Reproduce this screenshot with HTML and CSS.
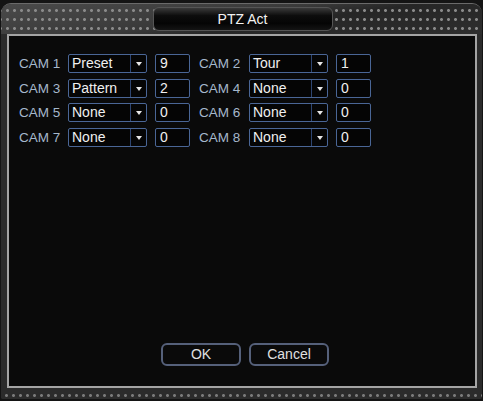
FILE: index.html
```html
<!DOCTYPE html>
<html>
<head>
<meta charset="utf-8">
<link rel="stylesheet" href="styles.css">
</head>
<body>
<div class="frame">
  <div class="header">
    <div class="title">PTZ Act</div>
  </div>
  <div class="panel">
    <div class="grid">
      <span class="lbl">CAM 1</span>
      <div class="sel"><span class="val">Preset</span><span class="arr"></span></div>
      <div class="num">9</div>
      <span class="lbl">CAM 2</span>
      <div class="sel"><span class="val">Tour</span><span class="arr"></span></div>
      <div class="num">1</div>

      <span class="lbl">CAM 3</span>
      <div class="sel"><span class="val">Pattern</span><span class="arr"></span></div>
      <div class="num">2</div>
      <span class="lbl">CAM 4</span>
      <div class="sel"><span class="val">None</span><span class="arr"></span></div>
      <div class="num">0</div>

      <span class="lbl">CAM 5</span>
      <div class="sel"><span class="val">None</span><span class="arr"></span></div>
      <div class="num">0</div>
      <span class="lbl">CAM 6</span>
      <div class="sel"><span class="val">None</span><span class="arr"></span></div>
      <div class="num">0</div>

      <span class="lbl">CAM 7</span>
      <div class="sel"><span class="val">None</span><span class="arr"></span></div>
      <div class="num">0</div>
      <span class="lbl">CAM 8</span>
      <div class="sel"><span class="val">None</span><span class="arr"></span></div>
      <div class="num">0</div>
    </div>
    <div class="buttons">
      <div class="btn">OK</div>
      <div class="btn">Cancel</div>
    </div>
  </div>
  <div class="footer"></div>
</div>
</body>
</html>
```
FILE: styles.css
```css
html, body {
  margin: 0;
  padding: 0;
  background: #141414;
  width: 483px;
  height: 401px;
  overflow: hidden;
  font-family: "Liberation Sans", Arial, sans-serif;
}
.frame {
  margin: 3px 1px 0 1px;
  height: 396px;
  border-radius: 10px 10px 2px 2px;
  background: #2b2b2b;
  border-top: 1px solid #6a6a6a;
  box-sizing: border-box;
  display: flex;
  flex-direction: column;
  overflow: hidden;
}
.header {
  height: 30px;
  display: flex;
  justify-content: center;
  align-items: flex-start;
  padding-top: 3px;
  box-sizing: border-box;
  background:
    radial-gradient(circle, #8a8a8a 0 1.1px, transparent 1.8px) 3px 2px / 7px 9px,
    linear-gradient(172deg, #4a4a4a 0%, #3a3a3a 45%, #262626 60%, #2e2e2e 100%);
}
.title {
  width: 180px;
  height: 24px;
  margin-left: 2px;
  border: 1px solid #555;
  border-radius: 6px;
  background: linear-gradient(#3a3a3a 0%, #0c0c0c 35%, #050505 70%, #141414 100%);
  color: #f2f2f2;
  font-size: 14px;
  line-height: 22px;
  text-align: center;
  box-sizing: border-box;
}
.panel {
  margin: 0 5px 0 6px;
  height: 354px;
  border: 2px solid #a4a4a4;
  background: #0a0a0a;
  box-sizing: border-box;
  display: flex;
  flex-direction: column;
  padding: 18px 0 20px 10px;
}
.grid {
  display: grid;
  grid-template-columns: 49px 79px 52px 50px 79px 43px;
  row-gap: 5.5px;
  grid-auto-rows: 19px;
}
.lbl {
  color: #a6b8cc;
  font-size: 13.5px;
  line-height: 19px;
  white-space: nowrap;
}
.sel, .num {
  border: 1px solid #4a6696;
  border-radius: 2px;
  box-sizing: border-box;
  height: 19px;
  color: #f0f0f0;
  font-size: 14px;
  line-height: 17px;
  background: #050505;
}
.sel {
  display: flex;
}
.val {
  flex: 1;
  padding-left: 3px;
}
.arr {
  width: 15px;
  border-left: 1px solid #2e4570;
  position: relative;
}
.arr::after {
  content: "";
  position: absolute;
  left: 5px;
  top: 7px;
  border-left: 3px solid transparent;
  border-right: 3px solid transparent;
  border-top: 4px solid #e8e8e8;
}
.num {
  width: 35px;
  margin-left: 8px;
  padding-left: 4px;
}
.buttons {
  margin-top: auto;
  display: flex;
  gap: 8px;
  padding-left: 142px;
}
.btn {
  width: 80px;
  height: 23px;
  border: 2px solid #55607a;
  border-radius: 6px;
  box-sizing: border-box;
  background: #0a0a0a;
  color: #e0e0e0;
  font-size: 14px;
  line-height: 19px;
  text-align: center;
}
.footer {
  height: 11px;
  background:
    radial-gradient(circle, #7a7a7a 0 1.1px, transparent 1.8px) 2px 2px / 7px 11px,
    #2b2b2b;
}
```
